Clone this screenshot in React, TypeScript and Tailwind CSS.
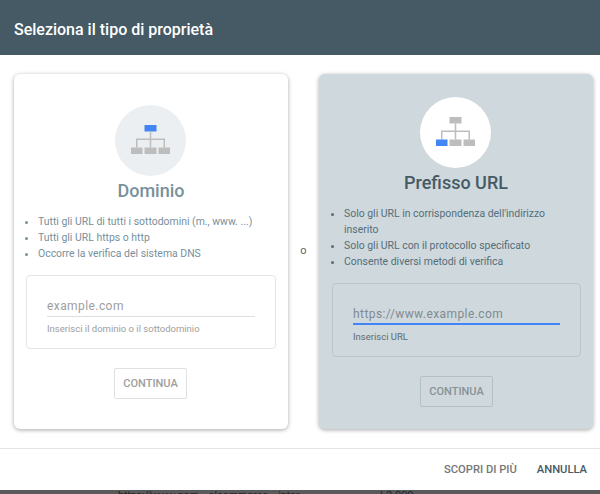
import { ReactNode } from 'react'

function SitemapIcon({ highlight }: { highlight: 'top' | 'left' }) {
  const gray = '#bdbdbd'
  const blue = '#4285f4'
  return (
    <svg width="39" height="29" viewBox="0 0 39 29" fill="none" className="mb-[3px]">
      <rect x="13.5" y="0" width="12" height="6.5" fill={highlight === 'top' ? blue : gray} />
      <rect x="18.75" y="6.5" width="1.5" height="16" fill={gray} />
      <rect x="5" y="14" width="1.5" height="8.5" fill={gray} />
      <rect x="32.5" y="14" width="1.5" height="8.5" fill={gray} />
      <rect x="5" y="13.5" width="29" height="1.5" fill={gray} />
      <rect x="0" y="22.5" width="11.5" height="6.5" fill={highlight === 'left' ? blue : gray} />
      <rect x="13.5" y="22.5" width="12" height="6.5" fill={gray} />
      <rect x="27.5" y="22.5" width="11.5" height="6.5" fill={gray} />
    </svg>
  )
}

function Bullets({ items, className }: { items: string[]; className: string }) {
  return (
    <ul className={`mt-[11px] list-disc text-[10.45px] leading-4 ${className}`}>
      {items.map((t) => (
        <li key={t}>{t}</li>
      ))}
    </ul>
  )
}

function Card({ active, icon, title, children }: { active?: boolean; icon: ReactNode; title: string; children: ReactNode }) {
  return (
    <div
      className={`flex h-[355px] w-[274px] flex-col rounded-[6px] shadow-[0_1px_4px_rgba(0,0,0,0.35)] ${
        active ? 'bg-[#cfd8dc] pt-[23px]' : 'bg-white pt-[31px]'
      }`}
    >
      <div
        className={`ml-[101px] flex h-[71px] w-[71px] items-center justify-center rounded-full ${
          active ? 'bg-white' : 'bg-[#eceff1]'
        }`}
      >
        {icon}
      </div>
      <h2 className={`mt-[3px] text-center text-[18px] leading-6 font-medium ${active ? 'text-[#455a64]' : 'text-[#78909c]'}`}>
        {title}
      </h2>
      {children}
    </div>
  )
}

function UrlBox({ active, placeholder, hint }: { active?: boolean; placeholder: string; hint: string }) {
  return (
    <div
      className={`mt-[13px] h-[74px] rounded-[4px] border pt-[20px] ${
        active ? 'ml-[13px] w-[249px] border-[#bcc5c9] pr-5 pl-5' : 'ml-3 w-[250px] border-[#e4e4e4] pr-5 pl-5'
      }`}
    >
      <div
        className={`h-[21px] text-[12px] leading-5 tracking-[0.42px] ${
          active ? 'border-b-2 border-[#4285f4] text-[#7f8b91]' : 'border-b border-[#dfdfdf] text-[#9e9e9e]'
        }`}
      >
        {placeholder}
      </div>
      <p className={`mt-[5px] text-[9.5px] leading-[14px] ${active ? 'text-[#5f6b71]' : 'text-[#9e9e9e]'}`}>{hint}</p>
    </div>
  )
}

function ContinueButton({ active }: { active?: boolean }) {
  return (
    <div
      className={`mt-[19px] flex h-[31px] w-[73px] items-center justify-center rounded-[2px] border pt-[1px] text-[11px] font-medium ${
        active ? 'ml-[101px] border-[#b6bfc3] text-[#879297]' : 'ml-[100px] border-[#e0e0e0] text-[#9e9e9e]'
      }`}
    >
      CONTINUA
    </div>
  )
}

export default function App() {
  return (
    <div className="flex h-[494px] w-[600px] flex-col overflow-hidden bg-white font-['Roboto',sans-serif]">
      <header className="flex h-[55px] items-center bg-[#455a64] px-[14px] pt-[5px]">
        <h1 className="text-[16px] font-medium text-white">Seleziona il tipo di proprietà</h1>
      </header>

      <main className="flex flex-1 items-center pr-[7px] pl-[14px]">
        <Card icon={<SitemapIcon highlight="top" />} title="Dominio">
          <Bullets
            className="pl-6 text-[#78909c]"
            items={['Tutti gli URL di tutti i sottodomini (m., www. ...)', 'Tutti gli URL https o http', 'Occorre la verifica del sistema DNS']}
          />
          <UrlBox placeholder="example.com" hint="Inserisci il dominio o il sottodominio" />
          <ContinueButton />
        </Card>

        <span className="flex-1 text-center text-[11px] text-[#5f6368]">o</span>

        <Card active icon={<SitemapIcon highlight="left" />} title="Prefisso URL">
          <Bullets
            className="pr-6 pl-[25px] text-[#546e7a]"
            items={["Solo gli URL in corrispondenza dell'indirizzo inserito", 'Solo gli URL con il protocollo specificato', 'Consente diversi metodi di verifica']}
          />
          <UrlBox active placeholder="https://www.example.com" hint="Inserisci URL" />
          <ContinueButton active />
        </Card>
      </main>

      <footer className="flex h-[42px] items-center justify-end gap-[20px] border-t border-[#e4e4e4] pt-[2px] pr-[13px] text-[11.2px] font-medium">
        <span className="text-[#757575]">SCOPRI DI PIÙ</span>
        <span className="text-[#455a64]">ANNULLA</span>
      </footer>

      <div className="flex h-[4px] items-start overflow-hidden bg-[#5a5a5a] pl-[118px] font-['Liberation_Sans',sans-serif] text-[11px] leading-[10px] whitespace-nowrap text-[#222222]">
        <span className="w-[262px]">https://www.gam · elcommerce · inter</span>
        <span>| 2 000</span>
      </div>
    </div>
  )
}
